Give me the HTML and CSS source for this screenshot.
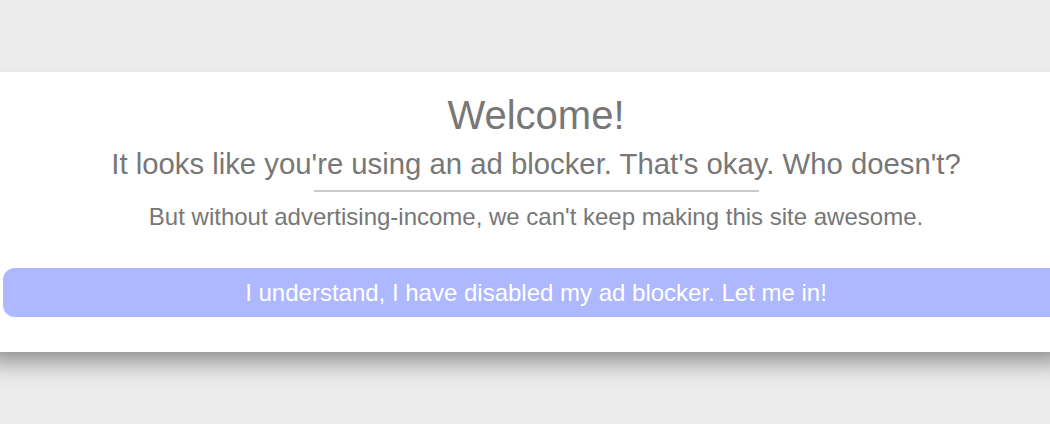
FILE: index.html
```html
<!DOCTYPE html>
<html lang="en">
<head>
<meta charset="utf-8">
<title>Welcome</title>
<link rel="stylesheet" href="styles.css">
</head>
<body>
<div class="panel">
  <h1 class="title">Welcome!</h1>
  <p class="subtitle">It looks like you're using an ad blocker. That's okay. Who doesn't?</p>
  <hr class="divider">
  <p class="note">But without advertising-income, we can't keep making this site awesome.</p>
  <button class="btn">I understand, I have disabled my ad blocker. Let me in!</button>
</div>
</body>
</html>
```
FILE: styles.css
```css
html, body {
  margin: 0;
  padding: 0;
  background: #ececec;
  overflow: hidden;
  height: 424px;
}
body {
  font-family: "Liberation Sans", Arial, sans-serif;
  color: #777;
}
.panel {
  margin: 72px 0 0 -20px;
  width: 1066px;
  height: 280px;
  padding: 0 3px 0 23px;
  background: #fff;
  box-shadow: 0 16px 22px -6px rgba(0, 0, 0, 0.4);
  display: flex;
  flex-direction: column;
  align-items: center;
  box-sizing: content-box;
}
.title {
  margin: 20px 0 0;
  font-size: 40px;
  font-weight: normal;
  line-height: 46px;
}
.subtitle {
  margin: 9px 0 0;
  font-size: 29.3px;
  line-height: 34px;
}
.divider {
  width: 445px;
  margin: 9px 0 0;
  border: 0;
  height: 2px;
  background: #ccc;
}
.note {
  margin: 11px 0 0;
  font-size: 24px;
  line-height: 28px;
}
.btn {
  margin-top: 37px;
  width: 100%;
  height: 49px;
  border: 0;
  border-radius: 12px;
  background: #aeb8ff;
  color: #fff;
  font-family: "Liberation Sans", Arial, sans-serif;
  font-size: 24px;
  padding: 0;
}
```
